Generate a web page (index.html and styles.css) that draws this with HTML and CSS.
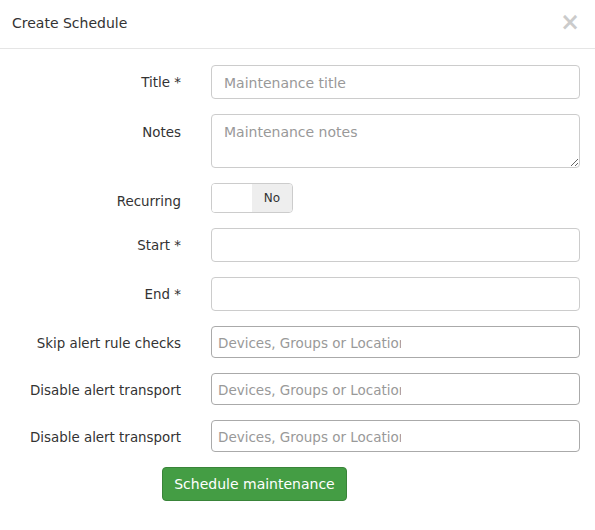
FILE: index.html
```html
<!DOCTYPE html>
<html>
<head>
<meta charset="utf-8">
<link rel="stylesheet" href="styles.css">
</head>
<body>
<div class="modal">
  <div class="modal-header">
    <h4 class="modal-title">Create Schedule</h4>
    <span class="close">×</span>
  </div>
  <div class="modal-body">
    <div class="row">
      <label class="lbl">Title *</label>
      <div class="ctl"><input class="input" type="text" placeholder="Maintenance title"></div>
    </div>
    <div class="row row-notes">
      <label class="lbl">Notes</label>
      <div class="ctl"><textarea class="input textarea" placeholder="Maintenance notes"></textarea></div>
    </div>
    <div class="row row-toggle">
      <label class="lbl">Recurring</label>
      <div class="ctl"><div class="toggle"><span class="toggle-on"></span><span class="toggle-off">No</span></div></div>
    </div>
    <div class="row">
      <label class="lbl">Start *</label>
      <div class="ctl"><input class="input" type="text"></div>
    </div>
    <div class="row">
      <label class="lbl">End *</label>
      <div class="ctl"><input class="input" type="text"></div>
    </div>
    <div class="row">
      <label class="lbl">Skip alert rule checks</label>
      <div class="ctl"><div class="select"><span class="select-ph">Devices, Groups or Locations</span></div></div>
    </div>
    <div class="row">
      <label class="lbl">Disable alert transport</label>
      <div class="ctl"><div class="select"><span class="select-ph">Devices, Groups or Locations</span></div></div>
    </div>
    <div class="row">
      <label class="lbl">Disable alert transport</label>
      <div class="ctl"><div class="select"><span class="select-ph">Devices, Groups or Locations</span></div></div>
    </div>
    <div class="actions">
      <button class="btn">Schedule maintenance</button>
    </div>
  </div>
</div>
</body>
</html>
```
FILE: styles.css
```css
* { box-sizing: border-box; }
html, body { margin: 0; padding: 0; background: #fff; }
body {
  font-family: "DejaVu Sans", Verdana, sans-serif;
  font-size: 13.4px;
  color: #333;
  width: 595px;
  height: 530px;
  overflow: hidden;
}
.modal { width: 595px; }
.modal-header {
  height: 49px;
  border-bottom: 1px solid #e5e5e5;
  display: flex;
  align-items: center;
  justify-content: space-between;
  padding: 0 15px 2px 12px;
}
.modal-title {
  margin: 0;
  font-size: 14px;
  font-weight: normal;
  color: #333;
}
.close {
  font-size: 24px;
  font-weight: bold;
  color: #000;
  opacity: 0.2;
  line-height: 1;
  margin-top: -2px;
}
.modal-body { padding: 16px 15px 0 0; }
.row {
  display: grid;
  grid-template-columns: 196px 1fr;
  align-items: start;
  margin-bottom: 15px;
}
.lbl {
  text-align: right;
  padding-right: 15px;
  padding-top: 8px;
  line-height: 20px;
  color: #333;
}
.row-notes .lbl { padding-top: 9px; }
.row-toggle .lbl { padding-top: 9px; }
.ctl { padding-left: 15px; }
.input {
  display: block;
  width: 100%;
  height: 34px;
  border: 1px solid #ccc;
  border-radius: 4px;
  padding: 7px 12px 5px;
  font-family: "DejaVu Sans", Verdana, sans-serif;
  font-size: 14px;
  color: #555;
  background: #fff;
}
.input::placeholder { color: #999; }
.textarea {
  height: 54px;
  resize: vertical;
  padding-top: 9px;
}
.toggle {
  width: 82px;
  height: 30px;
  border: 1px solid #ccc;
  border-radius: 4px;
  display: flex;
  overflow: hidden;
}
.toggle-on { flex: 1; background: #fff; }
.toggle-off {
  flex: 1;
  background: #eee;
  display: flex;
  align-items: center;
  justify-content: center;
  font-size: 12px;
  color: #333;
}
.select {
  height: 32px;
  border: 1px solid #aaa;
  border-radius: 4px;
  display: flex;
  align-items: center;
  padding-left: 6px;
  padding-top: 1px;
}
.select-ph {
  width: 183px;
  overflow: hidden;
  white-space: nowrap;
  color: #999;
  font-size: 13.5px;
}
.actions { padding-left: 162px; }
.btn {
  width: 185px;
  height: 34px;
  border: 1px solid #398439;
  border-radius: 4px;
  background: #449d44;
  color: #fff;
  font-family: "DejaVu Sans", Verdana, sans-serif;
  font-size: 14px;
  padding: 0;
}
```
